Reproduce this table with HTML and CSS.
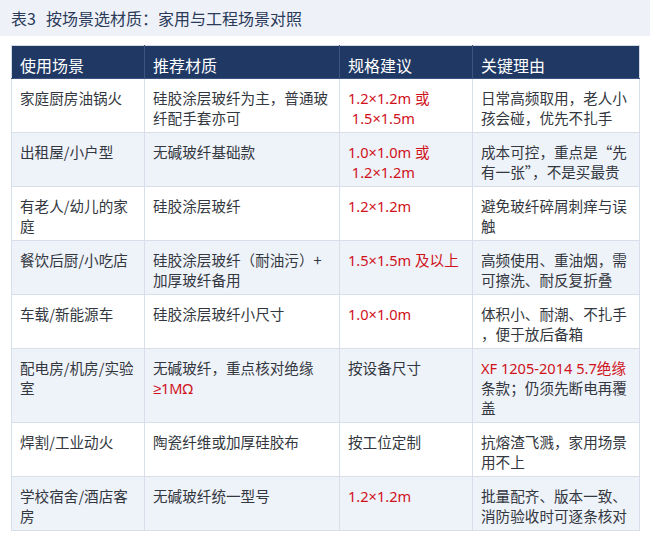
FILE: index.html
```html
<!DOCTYPE html>
<html lang="zh-CN">
<head>
<meta charset="utf-8">
<title>表3 按场景选材质</title>
<link rel="stylesheet" href="styles.css">
</head>
<body>
<div class="title-bar"><span class="tno">表3</span>按场景选材质：家用与工程场景对照</div>
<table class="spec">
  <colgroup>
    <col class="c1"><col class="c2"><col class="c3"><col class="c4">
  </colgroup>
  <thead>
    <tr><th>使用场景</th><th>推荐材质</th><th>规格建议</th><th>关键理由</th></tr>
  </thead>
  <tbody>
    <tr>
      <td>家庭厨房油锅火</td>
      <td>硅胶涂层玻纤为主，普通玻<br>纤配手套亦可</td>
      <td class="red">1.2×1.2m 或<br>&nbsp;1.5×1.5m</td>
      <td>日常高频取用，老人小<br>孩会碰，优先不扎手</td>
    </tr>
    <tr>
      <td>出租屋/小户型</td>
      <td>无碱玻纤基础款</td>
      <td class="red">1.0×1.0m 或<br>&nbsp;1.2×1.2m</td>
      <td>成本可控，重点是“先<br>有一张”，不是买最贵</td>
    </tr>
    <tr>
      <td>有老人/幼儿的家<br>庭</td>
      <td>硅胶涂层玻纤</td>
      <td class="red">1.2×1.2m</td>
      <td>避免玻纤碎屑刺痒与误<br>触</td>
    </tr>
    <tr>
      <td>餐饮后厨/小吃店</td>
      <td>硅胶涂层玻纤（耐油污）+<br>加厚玻纤备用</td>
      <td class="red">1.5×1.5m 及以上</td>
      <td>高频使用、重油烟，需<br>可擦洗、耐反复折叠</td>
    </tr>
    <tr>
      <td>车载/新能源车</td>
      <td>硅胶涂层玻纤小尺寸</td>
      <td class="red">1.0×1.0m</td>
      <td>体积小、耐潮、不扎手<br>，便于放后备箱</td>
    </tr>
    <tr>
      <td>配电房/机房/实验<br>室</td>
      <td>无碱玻纤，重点核对绝缘<br><span class="red"><span class="ge">≥</span>1MΩ</span></td>
      <td>按设备尺寸</td>
      <td><span class="red">XF 1205-2014 5.7绝缘</span><br>条款；仍须先断电再覆<br>盖</td>
    </tr>
    <tr>
      <td>焊割/工业动火</td>
      <td>陶瓷纤维或加厚硅胶布</td>
      <td>按工位定制</td>
      <td>抗熔渣飞溅，家用场景<br>用不上</td>
    </tr>
    <tr>
      <td>学校宿舍/酒店客<br>房</td>
      <td>无碱玻纤统一型号</td>
      <td class="red">1.2×1.2m</td>
      <td>批量配齐、版本一致、<br>消防验收时可逐条核对</td>
    </tr>
  </tbody>
</table>
</body>
</html>
```

FILE: styles.css
```css
html, body {
  margin: 0;
  padding: 0;
  background: #ffffff;
}
body {
  width: 650px;
  height: 544px;
  overflow: hidden;
  font-family: "Noto Sans CJK SC", "Noto Sans", sans-serif;
  color: #333740;
}
.title-bar {
  height: 36px;
  box-sizing: border-box;
  background: #eef1f8;
  padding-left: 11px;
  font-size: 16px;
  line-height: 36px;
  color: #2a3a58;
  white-space: nowrap;
}
.tno {
  margin-right: 10px;
}
.spec {
  margin: 9px 0 0 11px;
  width: 628px;
  border-collapse: collapse;
  table-layout: fixed;
  border: 1px solid #d3dae6;
}
.c1 { width: 133px; }
.c2 { width: 195px; }
.c3 { width: 133px; }
.c4 { width: 167px; }
.spec th {
  background: #1f3864;
  color: #ffffff;
  font-weight: normal;
  font-size: 16px;
  line-height: 20px;
  text-align: left;
  padding: 9px 8px 3px;
  border: 1px solid #3c5480;
  border-top-color: #d3dae6;
  white-space: nowrap;
}
.spec th:first-child { border-left-color: #d3dae6; }
.spec th:last-child { border-right-color: #d3dae6; }
.spec td {
  font-size: 14.6px;
  line-height: 20px;
  padding: 9px 8px 4px;
  vertical-align: top;
  border: 1px solid #d8dfea;
  white-space: nowrap;
}
.spec tbody tr:nth-child(even) td {
  background: #eef2f9;
}
.red {
  color: #d0121b;
  font-family: "Noto Sans", "Noto Sans CJK SC", sans-serif;
}
.ge {
  font-family: "Liberation Sans", "DejaVu Sans", sans-serif;
}
```
